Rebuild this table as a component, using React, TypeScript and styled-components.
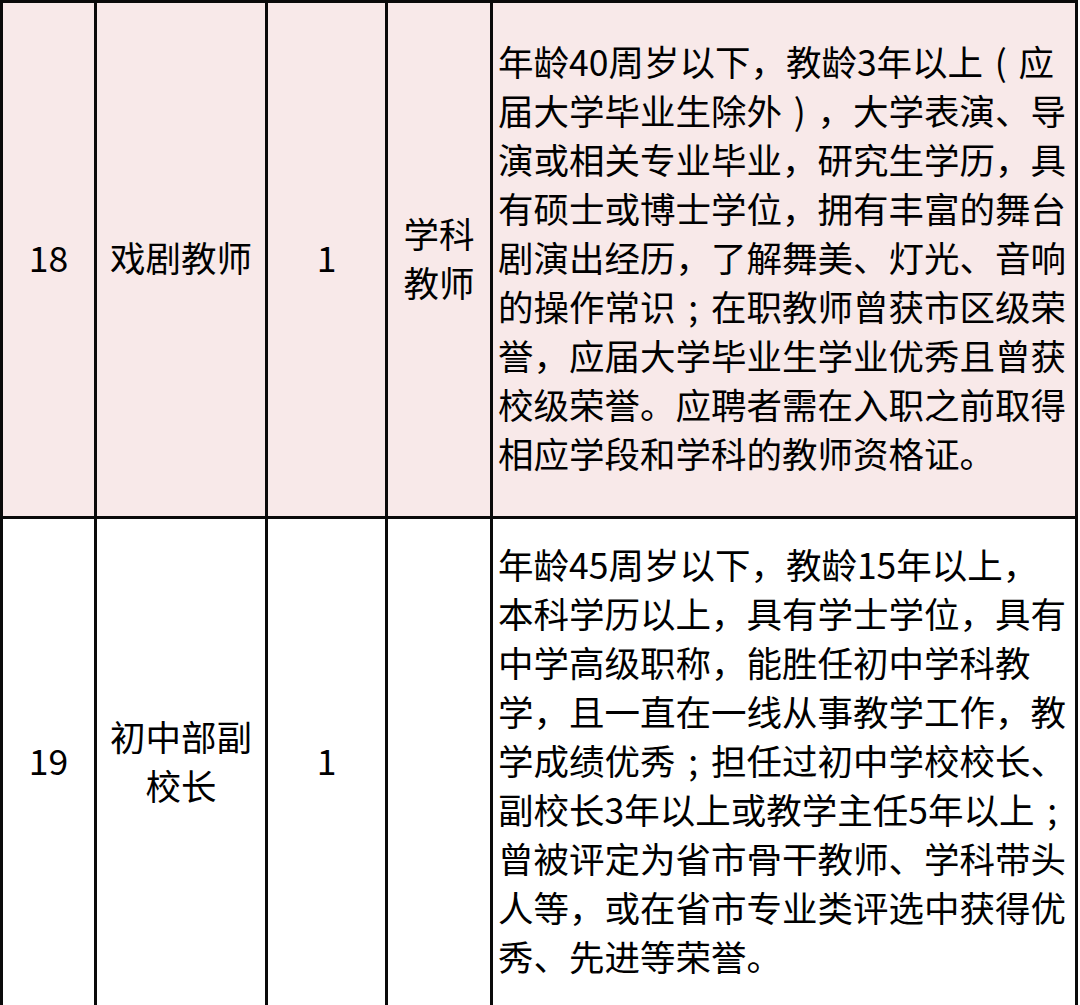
import React from "react";
import styled, { createGlobalStyle } from "styled-components";

const Global = createGlobalStyle`
  html, body { margin: 0; padding: 0; background: #ffffff; }
  body { font-family: "Noto Sans CJK SC", "Noto Sans", sans-serif; color: #000; }
`;

const Table = styled.div`
  display: grid;
  grid-template-columns: 91px 168px 117px 102px 582px;
  grid-auto-rows: auto;
  gap: 3px;
  padding: 3px;
  background: #0a0a0a;
  width: 1078px;
  box-sizing: border-box;
`;

const Cell = styled.div<{ $bg: string; $h: number; $left?: boolean }>`
  background: ${(p) => p.$bg};
  height: ${(p) => p.$h}px;
  display: flex;
  flex-direction: column;
  justify-content: center;
  align-items: ${(p) => (p.$left ? "flex-start" : "center")};
  padding-left: ${(p) => (p.$left ? "5px" : "0")};
  padding-bottom: 6px;
  font-size: 35.5px;
  line-height: 49px;
  text-align: ${(p) => (p.$left ? "left" : "center")};
  box-sizing: border-box;
`;

const Line = styled.span`
  display: block;
  white-space: nowrap;
`;

const Punct = styled.span`
  display: inline-block;
  width: 1em;
  text-align: center;
`;

type Row = {
  bg: string;
  h: number;
  no: string;
  name: string[];
  count: string;
  kind: string[];
  desc: string[];
};

const rows: Row[] = [
  {
    bg: "#F8E9E9",
    h: 513,
    no: "18",
    name: ["戏剧教师"],
    count: "1",
    kind: ["学科", "教师"],
    desc: [
      "年龄40周岁以下，教龄3年以上（应",
      "届大学毕业生除外），大学表演、导",
      "演或相关专业毕业，研究生学历，具",
      "有硕士或博士学位，拥有丰富的舞台",
      "剧演出经历，了解舞美、灯光、音响",
      "的操作常识；在职教师曾获市区级荣",
      "誉，应届大学毕业生学业优秀且曾获",
      "校级荣誉。应聘者需在入职之前取得",
      "相应学段和学科的教师资格证。",
    ],
  },
  {
    bg: "#FFFFFF",
    h: 487,
    no: "19",
    name: ["初中部副", "校长"],
    count: "1",
    kind: [],
    desc: [
      "年龄45周岁以下，教龄15年以上，",
      "本科学历以上，具有学士学位，具有",
      "中学高级职称，能胜任初中学科教",
      "学，且一直在一线从事教学工作，教",
      "学成绩优秀；担任过初中学校校长、",
      "副校长3年以上或教学主任5年以上；",
      "曾被评定为省市骨干教师、学科带头",
      "人等，或在省市专业类评选中获得优",
      "秀、先进等荣誉。",
    ],
  },
];

const centered: Record<string, string> = { "（": "(", "）": ")", "；": ";" };

const renderText = (t: string) =>
  t.split(/([（）；])/).map((seg, i) =>
    centered[seg] ? <Punct key={i}>{centered[seg]}</Punct> : seg
  );

const Lines = ({ items }: { items: string[] }) => (
  <>
    {items.map((t, i) => (
      <Line key={i}>{renderText(t)}</Line>
    ))}
  </>
);

export default function App() {
  return (
    <>
      <Global />
      <Table>
        {rows.map((r) => (
          <React.Fragment key={r.no}>
            <Cell $bg={r.bg} $h={r.h}>
              <Line>{r.no}</Line>
            </Cell>
            <Cell $bg={r.bg} $h={r.h}>
              <Lines items={r.name} />
            </Cell>
            <Cell $bg={r.bg} $h={r.h}>
              <Line>{r.count}</Line>
            </Cell>
            <Cell $bg={r.bg} $h={r.h}>
              <Lines items={r.kind} />
            </Cell>
            <Cell $bg={r.bg} $h={r.h} $left>
              <Lines items={r.desc} />
            </Cell>
          </React.Fragment>
        ))}
      </Table>
    </>
  );
}
